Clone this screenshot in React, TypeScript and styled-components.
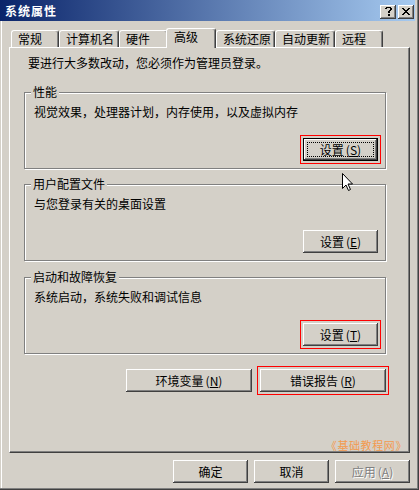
import React from "react";
import styled, { createGlobalStyle } from "styled-components";

const GlobalStyle = createGlobalStyle`
  html, body { margin: 0; padding: 0; background: #d4d0c8; }
  body {
    font-family: "Noto Sans CJK SC", "Noto Sans", sans-serif;
    font-size: 12px;
    color: #000;
  }
  * { box-sizing: border-box; }
`;

const Window = styled.div`
  position: relative;
  width: 419px;
  height: 490px;
  display: flex;
  flex-direction: column;
  background: #d4d0c8;
  box-shadow: inset -1px -1px 0 #404040, inset -2px -2px 0 #808080,
    inset 1px 0 0 #d4d0c8, inset 2px 0 0 #ffffff;
`;

const TitleBar = styled.div`
  height: 21px;
  margin-right: 4px;
  display: flex;
  align-items: center;
  padding: 0 1px 0 5px;
  background: linear-gradient(to right, #0a246a, #a6caf0);
`;

const Title = styled.span`
  flex: 1;
  color: #fff;
  font-weight: bold;
  font-size: 12px;
  line-height: 14px;
  letter-spacing: 1px;
`;

const CaptionButtons = styled.div`
  display: flex;
  gap: 2px;
  margin-top: 3px;
`;

const CaptionButton = styled.div`
  width: 16px;
  height: 14px;
  display: flex;
  align-items: center;
  justify-content: center;
  background: #d4d0c8;
  box-shadow: inset -1px -1px 0 #404040, inset 1px 1px 0 #ffffff,
    inset -2px -2px 0 #808080;
  padding-bottom: 1px;
`;

const TabStrip = styled.div`
  position: relative;
  z-index: 1;
  display: flex;
  align-items: flex-end;
  height: 19px;
  margin-top: 7px;
  padding-left: 11px;
`;

const Tab = styled.div<{ $w: number; $active?: boolean }>`
  position: relative;
  z-index: ${(p) => (p.$active ? 2 : 1)};
  width: ${(p) => p.$w + (p.$active ? 2 : 0)}px;
  height: ${(p) => (p.$active ? 20 : 17)}px;
  margin-left: ${(p) => (p.$active ? -2 : 0)}px;
  margin-bottom: ${(p) => (p.$active ? -1 : 0)}px;
  padding: 1px 0 0 ${(p) => (p.$active ? 7 : 6)}px;
  background: #d4d0c8;
  border-top: 1px solid #fff;
  border-left: 1px solid #fff;
  border-right: 1px solid #404040;
  border-radius: 3px 3px 0 0;
  box-shadow: inset -1px 0 0 #808080;
  line-height: 14px;
  white-space: nowrap;
`;

const Panel = styled.div`
  position: relative;
  margin: 0 9px;
  height: 406px;
  display: flex;
  flex-direction: column;
  padding: 8px 23px 0 14px;
  border-top: 1px solid #fff;
  border-left: 1px solid #fff;
  border-right: 1px solid #404040;
  border-bottom: 1px solid #404040;
  box-shadow: inset -1px -1px 0 #808080;
`;

const Intro = styled.div`
  margin-left: 4px;
  line-height: 14px;
  white-space: nowrap;
`;

const Group = styled.div<{ $gap: number }>`
  position: relative;
  margin-top: ${(p) => p.$gap}px;
  display: flex;
  flex-direction: column;
  padding: 12px 7px 7px 9px;
  border: 1px solid #808080;
  box-shadow: 1px 1px 0 #ffffff, inset 1px 1px 0 #ffffff;
`;

const GroupLabel = styled.span`
  position: absolute;
  top: -8px;
  left: 6px;
  padding: 0 2px;
  background: #d4d0c8;
  line-height: 14px;
  white-space: nowrap;
`;

const Desc = styled.div`
  line-height: 14px;
  white-space: nowrap;
`;

const GroupActions = styled.div`
  display: flex;
  justify-content: flex-end;
  margin-top: 19px;
`;

const PanelActions = styled.div`
  display: flex;
  justify-content: flex-end;
  gap: 8px;
  margin-top: 15px;
`;

const Button = styled.button<{ $w?: number; $default?: boolean; $marked?: boolean }>`
  position: relative;
  width: ${(p) => p.$w ?? 75}px;
  height: 23px;
  margin: 0;
  padding: 0;
  font-family: inherit;
  font-size: 12px;
  line-height: 14px;
  color: #000;
  background: #d4d0c8;
  border: ${(p) => (p.$default ? "1px solid #000" : "none")};
  box-shadow: inset -1px -1px 0 #404040, inset 1px 1px 0 #ffffff,
    inset -2px -2px 0 #808080;
  outline: ${(p) => (p.$marked ? "1px solid #ff0000" : "none")};
  outline-offset: 2px;
  white-space: nowrap;
  cursor: default;

  &::after {
    content: "";
    display: ${(p) => (p.$default ? "block" : "none")};
    position: absolute;
    inset: 3px;
    border: 1px dotted #000;
  }

  &:disabled {
    color: #808080;
    text-shadow: 1px 1px 0 #ffffff;
  }
`;

const Acc = styled.span`
  margin-left: 2px;
`;

const Watermark = styled.span`
  position: absolute;
  right: 2px;
  bottom: 1px;
  font-size: 11px;
  line-height: 12px;
  letter-spacing: 0.6px;
  color: #f39a4e;
  white-space: nowrap;
`;

const Footer = styled.div`
  display: flex;
  justify-content: flex-end;
  gap: 6px;
  margin: 7px 9px 0 0;
`;

const Cursor = styled.svg`
  position: absolute;
  left: 342px;
  top: 173px;
`;

const pixels = (rows: string[]) => {
  const out: React.ReactElement[] = [];
  rows.forEach((row, y) =>
    row.split("").forEach((c, x) => {
      if (c === "#") out.push(<rect key={`${x}-${y}`} x={x} y={y} width={1} height={1} />);
    })
  );
  return out;
};

const HelpGlyph = () => (
  <svg width="7" height="9" viewBox="0 0 7 9" shapeRendering="crispEdges" fill="#000">
    {pixels([
      ".#####.",
      "##...##",
      ".....##",
      "....##.",
      "...##..",
      "...##..",
      ".......",
      "...##..",
      "...##..",
    ])}
  </svg>
);

const CloseGlyph = () => (
  <svg width="8" height="7" viewBox="0 0 8 7" shapeRendering="crispEdges" fill="#000">
    {pixels([
      "##....##",
      ".##..##.",
      "..####..",
      "...##...",
      "..####..",
      ".##..##.",
      "##....##",
    ])}
  </svg>
);

const tabs = [
  { label: "常规", w: 48 },
  { label: "计算机名", w: 60 },
  { label: "硬件", w: 49 },
  { label: "高级", w: 48, active: true },
  { label: "系统还原", w: 59 },
  { label: "自动更新", w: 60 },
  { label: "远程", w: 48 },
];

const Label = ({ text, k }: { text: string; k: string }) => (
  <>
    {text}
    <Acc>
      (<u>{k}</u>)
    </Acc>
  </>
);

export default function App() {
  return (
    <>
      <GlobalStyle />
      <Window>
        <TitleBar>
          <Title>系统属性</Title>
          <CaptionButtons>
            <CaptionButton>
              <HelpGlyph />
            </CaptionButton>
            <CaptionButton>
              <CloseGlyph />
            </CaptionButton>
          </CaptionButtons>
        </TitleBar>

        <TabStrip>
          {tabs.map((t) => (
            <Tab key={t.label} $w={t.w} $active={t.active}>
              {t.label}
            </Tab>
          ))}
        </TabStrip>

        <Panel>
          <Intro>要进行大多数改动，您必须作为管理员登录。</Intro>

          <Group $gap={22}>
            <GroupLabel>性能</GroupLabel>
            <Desc>视觉效果，处理器计划，内存使用，以及虚拟内存</Desc>
            <GroupActions>
              <Button $default $marked>
                <Label text="设置" k="S" />
              </Button>
            </GroupActions>
          </Group>

          <Group $gap={15}>
            <GroupLabel>用户配置文件</GroupLabel>
            <Desc>与您登录有关的桌面设置</Desc>
            <GroupActions>
              <Button>
                <Label text="设置" k="E" />
              </Button>
            </GroupActions>
          </Group>

          <Group $gap={16}>
            <GroupLabel>启动和故障恢复</GroupLabel>
            <Desc>系统启动，系统失败和调试信息</Desc>
            <GroupActions>
              <Button $marked>
                <Label text="设置" k="T" />
              </Button>
            </GroupActions>
          </Group>

          <PanelActions>
            <Button $w={126}>
              <Label text="环境变量" k="N" />
            </Button>
            <Button $w={126} $marked>
              <Label text="错误报告" k="R" />
            </Button>
          </PanelActions>

          <Watermark>《基础教程网》</Watermark>
        </Panel>

        <Footer>
          <Button>确定</Button>
          <Button>取消</Button>
          <Button disabled>
            <Label text="应用" k="A" />
          </Button>
        </Footer>

        <Cursor width="12" height="19" viewBox="0 0 12 19">
          <path
            d="M0.5 0.5 L0.5 15.5 L4 12 L6.5 17.5 L8.5 16.5 L6 11 L10.5 11 Z"
            fill="#fff"
            stroke="#000"
            strokeWidth="1"
          />
        </Cursor>
      </Window>
    </>
  );
}
